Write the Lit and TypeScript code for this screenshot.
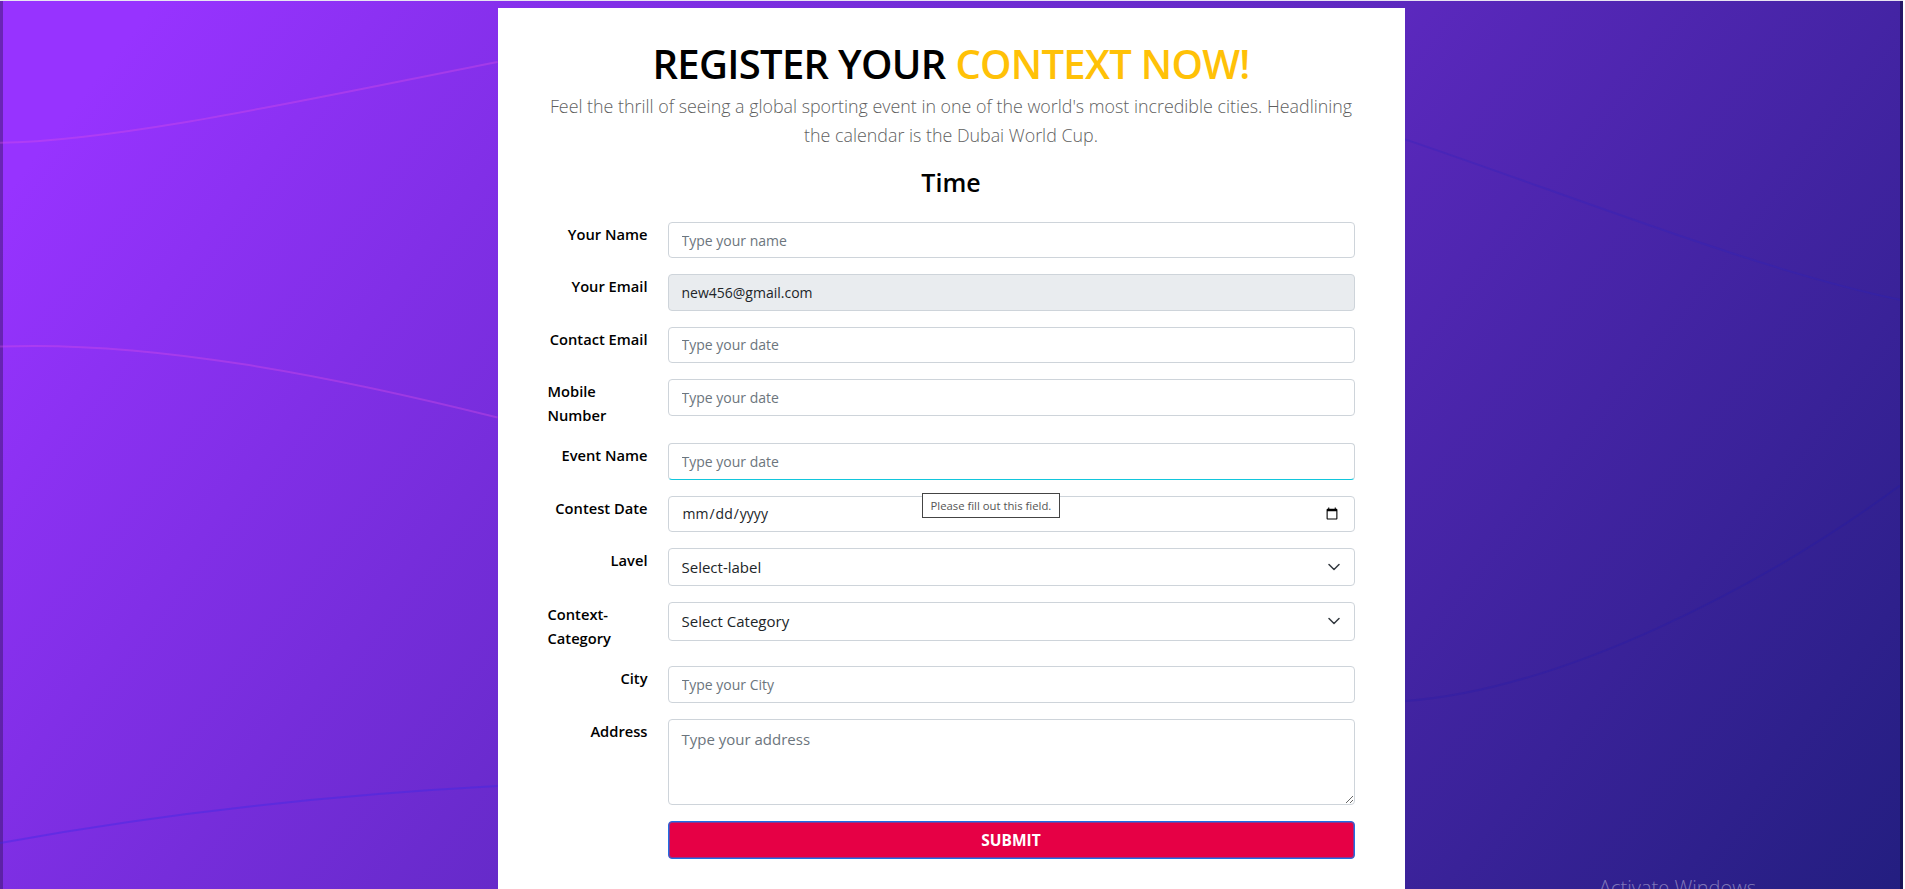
import { LitElement, html, css, svg } from 'lit';
import { customElement } from 'lit/decorators.js';

type Field = {
  label: string[];
  kind: 'text' | 'email' | 'date' | 'select' | 'area';
  hint?: string;
  value?: string;
};

const FIELDS: Field[] = [
  { label: ['Your Name'], kind: 'text', hint: 'Type your name' },
  { label: ['Your Email'], kind: 'email', value: 'new456@gmail.com' },
  { label: ['Contact Email'], kind: 'text', hint: 'Type your date' },
  { label: ['Mobile', 'Number'], kind: 'text', hint: 'Type your date' },
  { label: ['Event Name'], kind: 'text', hint: 'Type your date' },
  { label: ['Contest Date'], kind: 'date' },
  { label: ['Lavel'], kind: 'select', hint: 'Select-label' },
  { label: ['Context-', 'Category'], kind: 'select', hint: 'Select Category' },
  { label: ['City'], kind: 'text', hint: 'Type your City' },
  { label: ['Address'], kind: 'area', hint: 'Type your address' },
];

// the thin lines in the page background
const CURVES = [
  { d: 'M0 142 C120 140 300 100 498 61', c: 'rgba(220, 80, 230, 0.35)' },
  { d: 'M0 346 C150 340 330 375 498 417', c: 'rgba(220, 80, 230, 0.35)' },
  { d: 'M0 843 C170 812 330 795 498 786', c: 'rgba(60, 40, 230, 0.4)' },
  { d: 'M1405 138 C1560 190 1760 270 1902 299', c: 'rgba(40, 30, 190, 0.25)' },
  { d: 'M1405 701 C1560 690 1760 590 1902 485', c: 'rgba(30, 25, 170, 0.25)' },
];

@customElement('app-root')
export class AppRoot extends LitElement {
  static styles = css`
    :host {
      display: block;
      height: 889px;
      overflow: hidden;
      font-family: 'Open Sans', sans-serif;
    }
    .page {
      position: relative;
      height: 889px;
      box-sizing: border-box;
      margin-right: 2px;
      padding-top: 7px;
      overflow: hidden;
      display: flex;
      justify-content: center;
      background: linear-gradient(128deg, #9733ff 6%, #231e80 100%);
      box-shadow: inset 3px 0 0 rgba(50, 20, 90, 0.45), inset -3px 0 0 rgba(20, 15, 60, 0.6);
      border-top: 1px solid #e8e4f2;
    }
    .curves {
      position: absolute;
      inset: 0;
      width: 100%;
      height: 100%;
    }
    .card {
      position: relative;
      width: 907px;
      margin-right: 1px;
      box-sizing: border-box;
      padding: 27px 50px 0;
      background: #fff;
    }
    h1 {
      margin: 0;
      text-align: center;
      font-size: 40px;
      line-height: 57px;
      font-weight: 600;
      letter-spacing: -0.7px;
      color: #000;
    }
    h1 span {
      color: #ffc107;
    }
    .lead {
      margin: 0;
      text-align: center;
      font-size: 17.85px;
      line-height: 29px;
      font-weight: 300;
      color: #5f5f5f;
    }
    h2 {
      margin: 13px 0 20px;
      text-align: center;
      font-size: 25px;
      line-height: 39px;
      font-weight: 600;
      color: #000;
    }
    .row {
      position: relative;
      display: grid;
      grid-template-columns: 100px 1fr;
      column-gap: 20px;
      align-items: start;
      margin-bottom: 16px;
    }
    label {
      display: flex;
      justify-content: flex-end;
      font-size: 14.7px;
      line-height: 24px;
      font-weight: 600;
      color: #000;
      white-space: nowrap;
    }
    label.multi {
      justify-content: flex-start;
    }
    .ctl {
      position: relative;
    }
    input,
    select,
    textarea {
      display: block;
      width: 100%;
      box-sizing: border-box;
      height: 36.4px;
      padding: 6px 13px;
      font: 14px/22px 'Open Sans', sans-serif;
      color: #212529;
      background: #fff;
      border: 1px solid #ced4da;
      border-radius: 4px;
      outline: none;
    }
    input::placeholder,
    textarea::placeholder {
      color: #6c757d;
    }
    input:disabled {
      background: #e9ecef;
      opacity: 1;
    }
    input.focus {
      border-bottom-color: #12c6dc;
    }
    select {
      height: 38.3px;
      font-size: 15px;
      appearance: none;
    }
    textarea {
      height: 86.4px;
      padding-top: 8px;
      font-size: 15px;
      resize: vertical;
    }
    .chev {
      position: absolute;
      right: 15px;
      top: 13px;
      width: 12px;
      height: 12px;
      pointer-events: none;
    }
    .tip {
      position: absolute;
      left: 254px;
      top: 50px;
      z-index: 2;
      box-sizing: border-box;
      height: 24.4px;
      padding: 0 8px;
      font-size: 11.3px;
      line-height: 23px;
      color: #555;
      background: #fff;
      border: 1px solid #444;
      white-space: nowrap;
    }
    .submit {
      display: block;
      width: 100%;
      height: 38px;
      font: 700 15.5px 'Open Sans', sans-serif;
      color: #fff;
      background: #e60045;
      border: 1px solid #1f6fe5;
      border-radius: 4px;
      box-shadow: inset 0 0 0 1px rgba(31, 111, 229, 0.5);
    }
    .watermark {
      position: absolute;
      left: 1599px;
      top: 873px;
      font-size: 20px;
      line-height: 28px;
      font-weight: 300;
      color: rgba(255, 255, 255, 0.4);
      white-space: nowrap;
    }
  `;

  private control(f: Field, i: number) {
    if (f.kind === 'area') return html`<textarea placeholder=${f.hint ?? ''}></textarea>`;
    if (f.kind === 'date') return html`<input type="date" />`;
    if (f.kind === 'email') return html`<input type="text" disabled .value=${f.value ?? ''} />`;
    if (f.kind === 'select') {
      return html`
        <select><option>${f.hint}</option></select>
        <svg class="chev" viewBox="0 0 12 12" fill="none" stroke="#343a40" stroke-width="1.5" stroke-linecap="round" stroke-linejoin="round">
          <path d="M1 3.5l5 5 5-5" />
        </svg>
      `;
    }
    return html`<input type="text" class=${i === 4 ? 'focus' : ''} placeholder=${f.hint ?? ''} />`;
  }

  render() {
    return html`
      <div class="page">
        <svg class="curves" viewBox="0 0 1905 889" fill="none" stroke-width="2">
          ${CURVES.map((k) => svg`<path d=${k.d} stroke=${k.c} />`)}
        </svg>
        <div class="card">
          <h1>REGISTER YOUR <span>CONTEXT NOW!</span></h1>
          <p class="lead">
            Feel the thrill of seeing a global sporting event in one of the world's most incredible cities. Headlining
            the calendar is the Dubai World Cup.
          </p>
          <h2>Time</h2>
          <form>
            ${FIELDS.map(
              (f, i) => html`
                <div class="row">
                  <label class=${f.label.length > 1 ? 'multi' : ''}>
                    <span>${f.label.map((l, n) => (n ? html`<br />${l}` : l))}</span>
                  </label>
                  <div class="ctl">
                    ${this.control(f, i)}
                    ${i === 4 ? html`<div class="tip">Please fill out this field.</div>` : ''}
                  </div>
                </div>
              `,
            )}
            <div class="row">
              <span></span>
              <button class="submit" type="button">SUBMIT</button>
            </div>
          </form>
        </div>
        <div class="watermark">Activate Windows</div>
      </div>
    `;
  }
}
